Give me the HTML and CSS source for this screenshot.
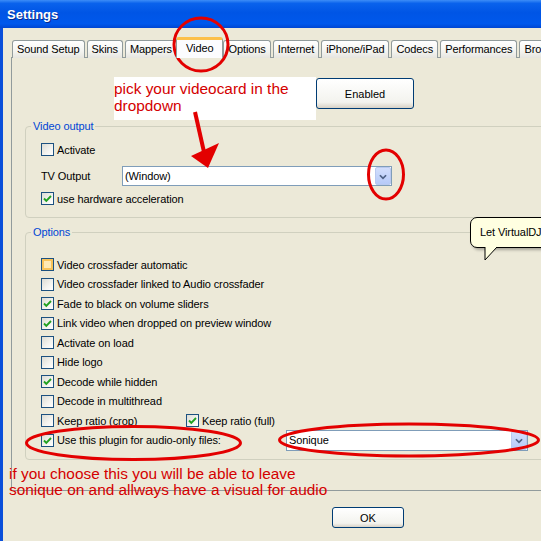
FILE: index.html
```html
<!DOCTYPE html>
<html>
<head>
<meta charset="utf-8">
<title>Settings</title>
<link rel="stylesheet" href="styles.css">
</head>
<body>
<div class="window">
  <div class="titlebar"><span class="title">Settings</span></div>
  <div class="frame">
    <div class="tabstrip">
      <div class="tab">Sound Setup</div>
      <div class="tab">Skins</div>
      <div class="tab">Mappers</div>
      <div class="tab selected">Video</div>
      <div class="tab">Options</div>
      <div class="tab">Internet</div>
      <div class="tab">iPhone/iPad</div>
      <div class="tab">Codecs</div>
      <div class="tab">Performances</div>
      <div class="tab">Browser</div>
    </div>
    <div class="panel">
      <div class="top-row"><button class="btn btn-enabled">Enabled</button></div>
      <fieldset class="group group-video">
        <legend>Video output</legend>
        <div class="row"><span class="cb"></span><span class="lbl">Activate</span></div>
        <div class="row row-combo">
          <span class="combo-label">TV Output</span>
          <div class="combo combo-tv"><span class="combo-text">(Window)</span><span class="combo-btn"><svg viewBox="0 0 16 18" width="16" height="18"><polyline points="4.5,7 8,10.5 11.5,7" fill="none" stroke="#4D6185" stroke-width="2"/></svg></span></div>
        </div>
        <div class="row"><span class="cb checked"><svg viewBox="0 0 11 11" width="11" height="11"><polyline points="2,5.5 4.3,7.8 9,3" fill="none" stroke="#21A121" stroke-width="1.9"/></svg></span><span class="lbl">use hardware acceleration</span></div>
      </fieldset>
      <fieldset class="group group-options">
        <legend>Options</legend>
        <div class="row"><span class="cb hot"></span><span class="lbl">Video crossfader automatic</span></div>
        <div class="row"><span class="cb"></span><span class="lbl">Video crossfader linked to Audio crossfader</span></div>
        <div class="row"><span class="cb checked"><svg viewBox="0 0 11 11" width="11" height="11"><polyline points="2,5.5 4.3,7.8 9,3" fill="none" stroke="#21A121" stroke-width="1.9"/></svg></span><span class="lbl">Fade to black on volume sliders</span></div>
        <div class="row"><span class="cb checked"><svg viewBox="0 0 11 11" width="11" height="11"><polyline points="2,5.5 4.3,7.8 9,3" fill="none" stroke="#21A121" stroke-width="1.9"/></svg></span><span class="lbl">Link video when dropped on preview window</span></div>
        <div class="row"><span class="cb"></span><span class="lbl">Activate on load</span></div>
        <div class="row"><span class="cb"></span><span class="lbl">Hide logo</span></div>
        <div class="row"><span class="cb checked"><svg viewBox="0 0 11 11" width="11" height="11"><polyline points="2,5.5 4.3,7.8 9,3" fill="none" stroke="#21A121" stroke-width="1.9"/></svg></span><span class="lbl">Decode while hidden</span></div>
        <div class="row"><span class="cb"></span><span class="lbl">Decode in multithread</span></div>
        <div class="row">
          <div class="item item-crop"><span class="cb"></span><span class="lbl">Keep ratio (crop)</span></div>
          <div class="item"><span class="cb checked"><svg viewBox="0 0 11 11" width="11" height="11"><polyline points="2,5.5 4.3,7.8 9,3" fill="none" stroke="#21A121" stroke-width="1.9"/></svg></span><span class="lbl">Keep ratio (full)</span></div>
        </div>
        <div class="row">
          <div class="item item-plugin"><span class="cb checked"><svg viewBox="0 0 11 11" width="11" height="11"><polyline points="2,5.5 4.3,7.8 9,3" fill="none" stroke="#21A121" stroke-width="1.9"/></svg></span><span class="lbl">Use this plugin for audio-only files:</span></div>
          <div class="combo combo-plugin"><span class="combo-text">Sonique</span><span class="combo-btn"><svg viewBox="0 0 16 18" width="16" height="18"><polyline points="4.5,7 8,10.5 11.5,7" fill="none" stroke="#4D6185" stroke-width="2"/></svg></span></div>
        </div>
      </fieldset>
    </div>
    <div class="bottom-row"><button class="btn btn-ok">OK</button></div>
  </div>
</div>

<div class="note note-top">pick your videocard in the<br>dropdown</div>
<div class="note note-bottom">if you choose this you will be able to leave<br>sonique on and allways have a visual for audio</div>

<div class="balloon">Let VirtualDJ use this plugin for audio-only files</div>
<svg class="balloon-tail" viewBox="0 0 14 14" width="14" height="14"><polygon points="1,0 1,13 13,0" fill="#FFFFE1"/><polyline points="1,0 1,13 13,0" fill="none" stroke="#000" stroke-width="1"/></svg>

<svg class="marks" viewBox="0 0 541 541" width="541" height="541">
  <ellipse cx="201" cy="44.5" rx="27" ry="26.5" fill="none" stroke="#E30000" stroke-width="3"/>
  <ellipse cx="386" cy="174.5" rx="17.5" ry="24.5" fill="none" stroke="#E30000" stroke-width="3"/>
  <ellipse cx="133.5" cy="443" rx="107" ry="16.5" fill="none" stroke="#E30000" stroke-width="3"/>
  <ellipse cx="409" cy="440" rx="129.5" ry="16" fill="none" stroke="#E30000" stroke-width="3"/>
  <line x1="195" y1="112" x2="204" y2="152" stroke="#E30000" stroke-width="4"/>
  <polygon points="191,156 219,143 208,168" fill="#E30000"/>
</svg>
</body>
</html>
```

FILE: styles.css
```css
* { box-sizing: border-box; }
html, body { margin: 0; padding: 0; }
body {
  width: 541px;
  height: 541px;
  overflow: hidden;
  position: relative;
  background: #ECE9D8;
  font-family: "Liberation Sans", Arial, sans-serif;
  font-size: 11px;
  letter-spacing: -0.1px;
  color: #000;
}
.window { width: 541px; height: 541px; display: flex; flex-direction: column; }
.titlebar {
  flex: none;
  height: 28px;
  display: flex;
  align-items: center;
  padding-left: 7px;
  background: linear-gradient(#3D8DF7 0%, #0A62EC 12%, #0055E5 45%, #0058EC 85%, #0046D2 100%);
}
.title {
  color: #fff;
  font-weight: bold;
  font-size: 13px;
  font-family: "Liberation Sans", Arial, sans-serif;
  letter-spacing: 0;
  text-shadow: 1px 1px 0 #0A2A8A;
}
.frame { flex: 1; border-left: 3px solid #0A4FDA; }

.tabstrip {
  display: flex;
  align-items: flex-end;
  height: 21px;
  margin-top: 9px;
  padding-left: 9px;
  white-space: nowrap;
}
.tab {
  flex: none;
  height: 18px;
  line-height: 17px;
  padding: 0 4px;
  margin-right: 2px;
  border: 1px solid #919B9C;
  border-bottom: none;
  border-radius: 3px 3px 0 0;
  background: linear-gradient(#FFFFFF, #F4F4F0 60%, #E6E5DF);
}
.tab.selected {
  position: relative;
  z-index: 1;
  height: 21px;
  line-height: 17px;
  padding: 0 9px;
  margin: 0 0 0 -3px;
  border-top: 3px solid #FCC04A;
  background: #FCFCFE;
}

.panel {
  margin-top: -1px;
  margin-left: 8px;
  width: 560px;
  height: 434px;
  border: 1px solid #919B9C;
  background: #ECE9D8;
  padding-top: 20px;
}
.top-row { display: flex; padding-left: 304px; }
.btn {
  font-family: "Liberation Sans", Arial, sans-serif;
  font-size: 11px;
  color: #000;
  border: 1px solid #003C74;
  border-radius: 3px;
  background: linear-gradient(#FFFFFF, #F3F3EE 80%, #D8D2C6);
  padding: 0;
}
.btn-enabled { width: 98px; height: 31px; }

.group {
  margin: 10px 0 0 13px;
  width: 560px;
  border: 1px solid #D0D0BF;
  border-radius: 4px;
  padding: 7px 0 9px 15px;
}
.group legend {
  padding: 0 2px;
  margin-left: -10px;
  line-height: 14px;
  color: #0046D5;
}
.group-options { margin-top: 7px; padding-top: 16px; }

.row { display: flex; align-items: center; height: 19px; }
.group-options .row { height: 19.5px; }
.row-combo { height: 20px; margin: 7px 0 3px; }
.item { display: flex; align-items: center; }
.item-crop { width: 145px; }
.item-plugin { width: 245px; }

.cb {
  flex: none;
  width: 13px;
  height: 13px;
  margin-right: 3px;
  border: 1px solid #1C5180;
  background: linear-gradient(135deg, #DCDCD4 0%, #F4F4F0 60%, #FFFFFF 100%);
  display: flex;
  align-items: center;
  justify-content: center;
}
.cb svg { display: block; }
.cb.hot { box-shadow: inset 0 0 0 2px #F8C35A; background: #FEE9B4; }
.lbl { white-space: nowrap; }

.combo-label { width: 81px; }
.combo {
  display: flex;
  align-items: center;
  border: 1px solid #7F9DB9;
  background: #fff;
  padding: 0 0 0 2px;
}
.combo-tv { width: 270px; height: 20px; }
.combo-plugin { width: 242px; height: 21px; }
.combo-text { flex: 1; }
.combo-btn {
  width: 16px;
  height: 18px;
  border: 1px solid #B9C9EF;
  border-radius: 2px;
  background: linear-gradient(#D2DEFC, #B6CAF8);
  display: flex;
}
.combo-plugin .combo-btn { height: 19px; }

.bottom-row { padding: 16px 0 0 329px; display: flex; }
.btn-ok { width: 72px; height: 21px; }

.note {
  position: absolute;
  color: #D40000;
  font-family: "Liberation Sans", Arial, sans-serif;
  font-size: 15.4px;
  letter-spacing: 0;
  white-space: nowrap;
}
.note-top {
  left: 114px;
  top: 77px;
  width: 202px;
  height: 43px;
  background: #fff;
  padding-top: 3px;
  line-height: 17px;
}
.note-bottom {
  left: 9px;
  top: 466px;
  line-height: 15.5px;
}

.balloon {
  position: absolute;
  left: 470px;
  top: 217px;
  width: 200px;
  height: 31px;
  border: 1px solid #000;
  border-radius: 7px;
  background: #FFFFE1;
  padding-left: 9px;
  line-height: 29px;
  white-space: nowrap;
  box-shadow: 2px 2px 3px rgba(0, 0, 0, 0.3);
}
.balloon-tail { position: absolute; left: 484px; top: 247px; }
.marks { position: absolute; left: 0; top: 0; pointer-events: none; }
```
